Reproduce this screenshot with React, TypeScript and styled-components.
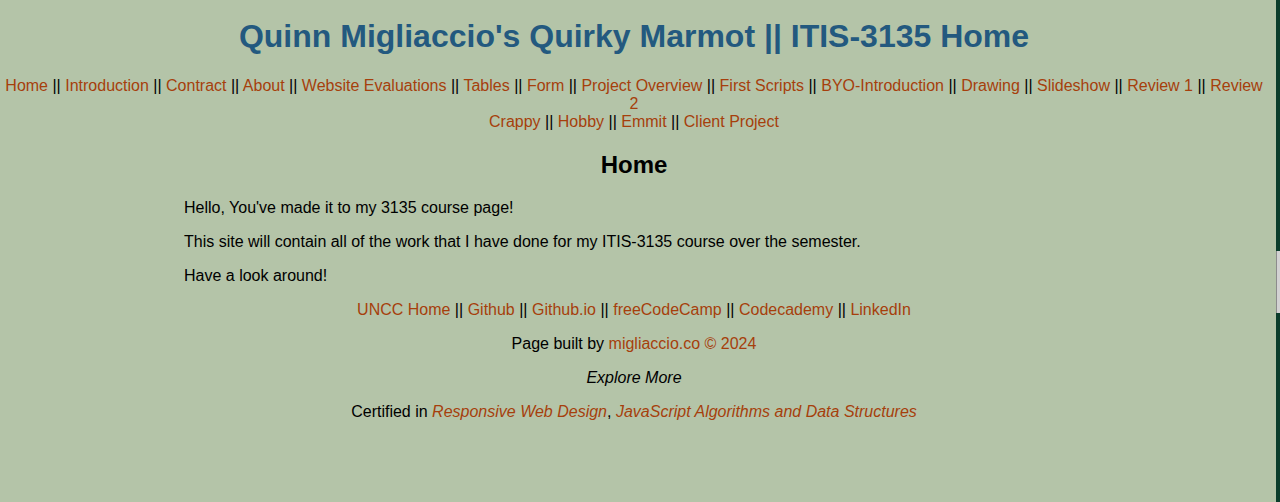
import { Fragment } from 'react';
import styled, { createGlobalStyle } from 'styled-components';

const GlobalStyle = createGlobalStyle`
  html, body {
    margin: 0;
    padding: 0;
    height: 100%;
    background-color: #b4c4a8;
  }
  body {
    font-family: 'Liberation Sans', Arial, sans-serif;
    font-size: 16px;
    color: #000000;
  }
`;

const Shell = styled.div`
  display: flex;
  height: 502px;
  overflow: hidden;
`;

const Page = styled.div`
  flex: 1;
  background-color: #b4c4a8;
  padding-right: 8px;
`;

const Rail = styled.div`
  width: 4px;
  background-color: #0b3d2b;
  display: flex;
  flex-direction: column;
`;

const Thumb = styled.div`
  margin-top: 251px;
  height: 62px;
  background-color: #d2d2d2;
  border-left: 1px solid #8c8c8c;
`;

const Title = styled.h1`
  margin: 18px 0 22px;
  text-align: center;
  font-size: 32px;
  font-weight: bold;
  color: #23597f;
`;

const NavBar = styled.nav`
  text-align: center;
  line-height: 18px;
`;

const Link = styled.a<{ $italic?: boolean }>`
  color: #a63f0c;
  text-decoration: none;
  font-style: ${(props) => (props.$italic ? 'italic' : 'normal')};
`;

const Sep = styled.span`
  color: #000000;
`;

const Heading = styled.h2`
  margin: 20px 0 20px;
  text-align: center;
  font-size: 24px;
  font-weight: bold;
`;

const Main = styled.main`
  width: 900px;
  margin: 0 auto;
`;

const Para = styled.p`
  margin: 16px 0;
  line-height: 18px;
`;

const Footer = styled.footer`
  text-align: center;
`;

const FooterLine = styled.p<{ $italic?: boolean }>`
  margin: 16px 0;
  line-height: 18px;
  font-style: ${(props) => (props.$italic ? 'italic' : 'normal')};
`;

const navItems = [
  'Home',
  'Introduction',
  'Contract',
  'About',
  'Website Evaluations',
  'Tables',
  'Form',
  'Project Overview',
  'First Scripts',
  'BYO-Introduction',
  'Drawing',
  'Slideshow',
  'Review 1',
  'Review 2',
];

const navItems2 = ['Crappy', 'Hobby', 'Emmit', 'Client Project'];

const footerLinks = ['UNCC Home', 'Github', 'Github.io', 'freeCodeCamp', 'Codecademy', 'LinkedIn'];

function LinkList({ items }: { items: string[] }) {
  return (
    <>
      {items.map((item, index) => (
        <Fragment key={item}>
          {index > 0 && <Sep> || </Sep>}
          <Link href="#">{item}</Link>
        </Fragment>
      ))}
    </>
  );
}

export default function App() {
  return (
    <>
      <GlobalStyle />
      <Shell>
        <Page>
          <Title>Quinn Migliaccio's Quirky Marmot || ITIS-3135 Home</Title>
          <NavBar>
            <LinkList items={navItems} />
            <br />
            <LinkList items={navItems2} />
          </NavBar>
          <Main>
            <Heading>Home</Heading>
            <Para>Hello, You've made it to my 3135 course page!</Para>
            <Para>This site will contain all of the work that I have done for my ITIS-3135 course over the semester.</Para>
            <Para>Have a look around!</Para>
            <Footer>
              <FooterLine>
                <LinkList items={footerLinks} />
              </FooterLine>
              <FooterLine>
                Page built by <Link href="#">migliaccio.co © 2024</Link>
              </FooterLine>
              <FooterLine $italic>Explore More</FooterLine>
              <FooterLine>
                Certified in <Link href="#" $italic>Responsive Web Design</Link>,{' '}
                <Link href="#" $italic>JavaScript Algorithms and Data Structures</Link>
              </FooterLine>
            </Footer>
          </Main>
        </Page>
        <Rail>
          <Thumb />
        </Rail>
      </Shell>
    </>
  );
}
